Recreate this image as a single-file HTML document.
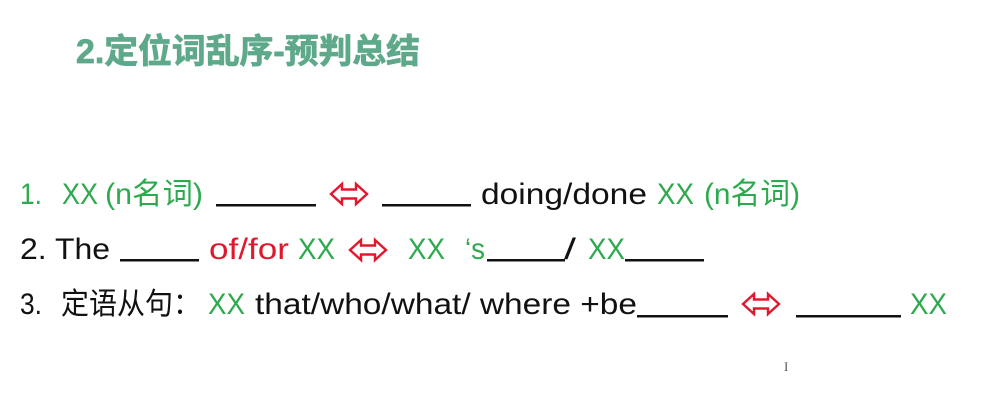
<!DOCTYPE html>
<html><head><meta charset="utf-8"><style>
html,body{margin:0;padding:0;background:#fff;width:990px;height:402px;overflow:hidden}
svg{display:block}
text{font-family:"Liberation Sans","Noto Sans CJK SC",sans-serif;font-size:30px}
.g{fill:#2eaa4e}.k{fill:#111}.r{fill:#e0182e}
</style></head><body>
<svg width="990" height="402" viewBox="0 0 990 402">
<defs>
<g id="arr"><path d="M1 0 L12 -10 L12 -4.5 L26 -4.5 L26 -10 L37 0 L26 10 L26 4.5 L12 4.5 L12 10 Z" fill="none" stroke="#e0182e" stroke-width="2.4" stroke-linejoin="miter"/></g>
</defs>
<text x="76" y="63" textLength="344" lengthAdjust="spacingAndGlyphs" style="font-size:34px;font-weight:bold;fill:#5ea98a;stroke:#5ea98a;stroke-width:0.8">2.定位词乱序-预判总结</text>

<!-- line 1 -->
<text class="g" x="20" y="204" textLength="22" lengthAdjust="spacingAndGlyphs">1.</text>
<text class="g" x="62" y="204" textLength="36" lengthAdjust="spacingAndGlyphs">XX</text>
<text class="g" x="105" y="204" textLength="98" lengthAdjust="spacingAndGlyphs">(n名词)</text>
<rect x="216" y="204" width="100" height="2.5" fill="#111"/>
<use href="#arr" x="330" y="194"/>
<rect x="382" y="204" width="89" height="2.5" fill="#111"/>
<text class="k" x="481" y="204" textLength="166" lengthAdjust="spacingAndGlyphs">doing/done</text>
<text class="g" x="657" y="204" textLength="37" lengthAdjust="spacingAndGlyphs">XX</text>
<text class="g" x="704" y="204" textLength="96" lengthAdjust="spacingAndGlyphs">(n名词)</text>

<!-- line 2 -->
<text class="k" x="20" y="259" textLength="90" lengthAdjust="spacingAndGlyphs">2. The</text>
<rect x="120" y="259" width="79" height="2.5" fill="#111"/>
<text class="r" x="209" y="259" textLength="80" lengthAdjust="spacingAndGlyphs">of/for</text>
<text class="g" x="298" y="259" textLength="37" lengthAdjust="spacingAndGlyphs">XX</text>
<use href="#arr" x="349" y="250"/>
<text class="g" x="408" y="259" textLength="37" lengthAdjust="spacingAndGlyphs">XX</text>
<text class="g" x="465" y="259" textLength="20" lengthAdjust="spacingAndGlyphs">‘s</text>
<rect x="487" y="259" width="78" height="2.5" fill="#111"/>
<text class="k" x="564" y="259" textLength="12" lengthAdjust="spacingAndGlyphs">/</text>
<text class="g" x="588" y="259" textLength="37" lengthAdjust="spacingAndGlyphs">XX</text>
<rect x="625" y="259" width="79" height="2.5" fill="#111"/>

<!-- line 3 -->
<text class="k" x="20" y="314" textLength="22" lengthAdjust="spacingAndGlyphs">3.</text>
<text class="k" x="61" y="314" textLength="140" lengthAdjust="spacingAndGlyphs">定语从句：</text>
<text class="g" x="208" y="314" textLength="37" lengthAdjust="spacingAndGlyphs">XX</text>
<text class="k" x="255" y="314" textLength="382" lengthAdjust="spacingAndGlyphs">that/who/what/ where +be</text>
<rect x="637" y="315" width="91" height="2.5" fill="#111"/>
<use href="#arr" x="742" y="304"/>
<rect x="796" y="315" width="105" height="2.5" fill="#111"/>
<text class="g" x="910" y="314" textLength="37" lengthAdjust="spacingAndGlyphs">XX</text>

<text x="784" y="371" style="font-size:13px;fill:#555;font-family:'Liberation Serif',serif">I</text>
</svg>
</body></html>
